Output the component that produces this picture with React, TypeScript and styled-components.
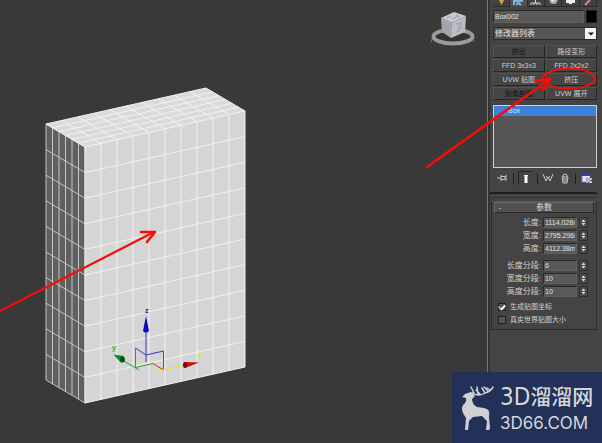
import React from "react";
import styled, { createGlobalStyle } from "styled-components";

const Global = createGlobalStyle`
  * { box-sizing: border-box; }
  body { margin: 0; background: #393939; }
  button, input, select { font: inherit; color: inherit; margin: 0; border-radius: 0; }
`;

const App_ = styled.div`
  position: relative;
  display: flex;
  min-height: 100vh;
  overflow: hidden;
  background: #393939;
  color: #d2d2d2;
  font-family: "Liberation Sans", "Noto Sans CJK SC", sans-serif;
  font-size: 8px;
  line-height: 10px;
`;

const Viewport = styled.main`
  flex: 1;
  min-width: 0;
  svg { display: block; width: 100%; height: auto; }
`;

const Panel = styled.aside`
  flex: none;
  width: 115px;
  padding: 0 5px 0 2px;
  background: #444444;
  border-left: 1px solid #8f7a24;
  box-shadow: inset 2px 0 #333431;
`;

const Stack = styled.div`
  display: flex;
  flex-direction: column;
  padding-left: 3px;
`;

const Tabs = styled.nav`
  display: grid;
  grid-template-columns: repeat(6, 1fr);
  height: 7px;
  margin-bottom: 3px;
`;

const Tab = styled.button<{ $active?: boolean }>`
  display: block;
  height: 7px;
  padding: 0;
  overflow: hidden;
  border: 0;
  border-right: 1px solid #2b2b2b;
  border-bottom: 1px solid ${p => (p.$active ? "#444" : "#2b2b2b")};
  background: ${p => (p.$active ? "#505050" : "#414141")};
  svg { display: block; margin: 0 auto; }
`;

const NameRow = styled.div`
  display: flex;
  gap: 2px;
  height: 13px;
  margin-bottom: 4px;
`;

const Field = styled.input`
  flex: 1;
  width: 100%;
  min-width: 0;
  padding: 0 1px;
  border: 1px solid #292929;
  border-right-color: #606060;
  border-bottom-color: #606060;
  background: #595959;
  color: #e2e2e2;
  font-size: 7px;
`;

const Swatch = styled.button`
  width: 11px;
  padding: 0;
  border: 1px solid #1c1c1c;
  background: #000;
`;

const Picker = styled.label`
  display: grid;
  grid-template-columns: 1fr 11px;
  height: 13px;
  margin-bottom: 5px;
  border: 1px solid #292929;
  background: #555;
  svg { grid-area: 1 / 2; width: 11px; height: 11px; background: #f3f3f3; pointer-events: none; }
`;

const Select = styled.select`
  grid-area: 1 / 1 / 2 / 3;
  appearance: none;
  padding: 0 1px;
  border: 0;
  background: transparent;
  color: #e4e4e4;
  line-height: 11px;
`;

const ButtonGrid = styled.div`
  display: grid;
  grid-template-columns: 1fr 1fr;
  grid-auto-rows: 13px;
  gap: 1px;
  margin-bottom: 5px;
`;

const ModButton = styled.button<{ $dim?: boolean }>`
  padding: 0;
  border: 1px solid #525252;
  border-right-color: #242424;
  border-bottom-color: #242424;
  background: #454545;
  color: ${p => (p.$dim ? "#111" : "#cfcfcf")};
  font-size: 7px;
  line-height: 11px;
  white-space: nowrap;
`;

const ModStack = styled.ul`
  height: 63px;
  margin: 0 0 2px;
  padding: 0;
  list-style: none;
  border: 1px solid #d0d0d0;
  background: #565656;
`;

const StackItem = styled.li`
  padding-left: 14px;
  background: #3d82d8;
  color: #d5e6f8;
  font-size: 7px;
`;

const Tools = styled.div`
  display: flex;
  align-items: center;
  justify-content: space-between;
  height: 16px;
  margin-bottom: 6px;
  padding: 0 4px 0 3px;
`;

const Tool = styled.button<{ $on?: boolean }>`
  display: grid;
  place-items: center;
  width: ${p => (p.$on ? "14px" : "12px")};
  height: 14px;
  padding: 0;
  border: 0;
  border-left: ${p => (p.$on ? "1px solid #222" : "0")};
  border-top: ${p => (p.$on ? "1px solid #222" : "0")};
  background: transparent;
`;

const Divider = styled.span`
  width: 1px;
  height: 11px;
  background: #202020;
`;

const Rule = styled.hr`
  height: 2px;
  margin: 0 0 3px;
  border: 0;
  background: #202020;
`;

const Rollout = styled.section`
  margin-left: 1px;
  padding-top: 3px;
  border-top: 1px solid #333;
`;

const Group = styled.fieldset`
  margin: 0;
  padding: 0 8px 3px 6px;
  min-width: 0;
  border: 1px solid #292929;
  border-top-color: #555;
  border-right-color: #303030;
`;

const RolloutTitle = styled.button`
  display: grid;
  grid-template-columns: 8px 1fr 8px;
  align-items: center;
  width: calc(100% + 10px);
  height: 11px;
  margin: 0 -5px 4px -4px;
  padding: 0 1px;
  border: 1px solid #292929;
  border-top-color: #686868;
  border-left-color: #686868;
  background: #505050;
  color: #dfdfdf;
  line-height: 9px;
`;

const Rows = styled.div`
  display: grid;
  row-gap: 2px;
  margin-bottom: 6px;
  & + & { margin-bottom: 3px; }
`;

const Row = styled.div`
  display: grid;
  grid-template-columns: 1fr 34px 9px;
  column-gap: 2px;
  height: 11px;
  align-items: center;
  text-align: right;
  white-space: nowrap;
  input { height: 11px; }
`;

const Spin = styled.span`
  display: flex;
  flex-direction: column;
  height: 11px;
  border: 1px solid #2e2e2e;
  button {
    flex: 1;
    display: grid;
    place-items: center;
    min-height: 0;
    padding: 0;
    border: 0;
    background: #494949;
  }
`;

const Check = styled.label`
  display: flex;
  align-items: center;
  gap: 4px;
  height: 13px;
  font-size: 7px;
  white-space: nowrap;
  input {
    appearance: none;
    display: grid;
    place-items: center;
    width: 8px;
    height: 8px;
    border: 1px solid #222;
    background: #555;
  }
  input:checked::before {
    content: "";
    width: 5px;
    height: 3px;
    border-left: 1px solid #fff;
    border-bottom: 2px solid #fff;
    transform: rotate(-45deg);
  }
`;

const Annotation = styled.svg`
  position: absolute;
  top: 0;
  right: 0;
  pointer-events: none;
`;

const Brand = styled.div`
  position: absolute;
  right: 0;
  bottom: 0;
  display: flex;
  align-items: center;
  gap: 6px;
  width: 150px;
  height: 71px;
  padding: 0 8px;
  background: #233057;
  color: #d5d7dc;
`;

const BrandText = styled.div`
  display: grid;
  row-gap: 6px;
  font-family: Inter, "Noto Sans CJK SC", sans-serif;
  white-space: nowrap;
`;

const BrandName = styled.div`
  display: flex;
  align-items: center;
  height: 24px;
  font-size: 21px;
  font-weight: 500;
  line-height: 24px;
`;

const BrandInitials = styled.span`
  font-family: "DejaVu Sans Condensed", "DejaVu Sans", sans-serif;
  font-size: 24px;
  font-weight: 400;
`;

const BrandSite = styled.div`
  font-size: 17px;
  line-height: 16px;
`;

type P = [number, number];
const lerp = (a: P, b: P, t: number): P => [a[0] + (b[0] - a[0]) * t, a[1] + (b[1] - a[1]) * t];

/* Grid lines of a quad a-b-c-d, with `u` cells along a-b and `v` cells along a-d. */
function mesh(a: P, b: P, c: P, d: P, u: number, v: number) {
  let path = "";
  for (let i = 0; i <= u; i++) path += `M${lerp(a, b, i / u)}L${lerp(d, c, i / u)}`;
  for (let j = 0; j <= v; j++) path += `M${lerp(a, d, j / v)}L${lerp(b, c, j / v)}`;
  return path;
}

const faces: { pts: [P, P, P, P]; u: number; v: number; fill: string; line: string }[] = [
  { pts: [[46, 124], [85, 147], [85, 403], [46, 380]], u: 6, v: 10, fill: "#606060", line: "#c4c4c4" },
  { pts: [[46, 124], [206, 88], [245, 111], [85, 147]], u: 10, v: 6, fill: "#dadada", line: "#f2f2f2" },
  { pts: [[85, 147], [245, 111], [245, 367], [85, 403]], u: 10, v: 10, fill: "#d5d5d5", line: "#f1f1f1" },
];

function Scene() {
  return (
    <svg viewBox="0 0 487 443" role="img" aria-label="Box002">
      {faces.map((f, i) => (
        <g key={i}>
          <polygon points={f.pts.join(" ")} fill={f.fill} />
          <path d={mesh(...f.pts, f.u, f.v)} stroke={f.line} strokeWidth="1" fill="none" />
        </g>
      ))}
      <g fill="none" strokeWidth="1">
        <path d="M146 362V330M135.500 348L146 355L163.500 351" stroke="#3838b8" />
        <path d="M135.500 348V367.500L153 363.500M139 370L122 360" stroke="#25a332" />
        <path d="M163.500 351V370L153 363.500" stroke="#c52929" />
        <path d="M156 371.500L184 365" stroke="#e8e417" />
      </g>
      <path d="M146 316L143 331Q146 334 149 331Z" fill="#0909bd" />
      <path d="M113.500 354.500L124 356L121 363Z" fill="#07901b" />
      <ellipse cx="122.500" cy="359.500" rx="2.400" ry="3" fill="#074f10" />
      <path d="M199 362.500L184 362L185 368Z" fill="#d20a0a" />
      <ellipse cx="185" cy="365" rx="2" ry="3" fill="#770909" />
      <g fontFamily="Liberation Sans, sans-serif" fontSize="7" fontWeight="bold">
        <text x="145" y="313" fill="#2020a8">z</text>
        <text x="112" y="350" fill="#3ba83f">y</text>
        <text x="198" y="358" fill="#e8e417">x</text>
      </g>
      <ellipse cx="453" cy="36.500" rx="19.500" ry="7" fill="#333" stroke="#999b9b" strokeWidth="4" />
      <path d="M432 39l-1 3M473 39l1 3" stroke="#777" />
      <path d="M441 18L452 22.500L451 38L442 32Z" fill="#a3a8ad" />
      <path d="M441 18L454 12L466 16L452 22.500Z" fill="#c7cbd0" />
      <path d="M452 22.500L466 16L465 32L451 38Z" fill="#b9bec5" />
      <path d="M447 18l4-2M452 19l7-3M456 15l4 2M456 24l3-1v8l-3 1M461 22v7M445 24v6M448 26v5" stroke="#959da7" fill="none" />
      <g stroke="#f60d08" fill="none" strokeLinecap="round" strokeLinejoin="round">
        <path d="M0 311L154 232" strokeWidth="2.200" />
        <path d="M141 232L155 232L147 242" strokeWidth="2.600" />
      </g>
    </svg>
  );
}

const tabIcons = [
  <path d="M3 0h5l-2.500 5z" fill="#d6a33c" />,
  <path d="M1 5V1h9M4 5q0-4 4 0" stroke="#80b5df" strokeWidth="2" fill="none" />,
  <path d="M5.500 0v3M1 5V3h9v2M4 5V3M7 5V3" stroke="#ddd" fill="none" />,
  <g><circle cx="5.500" cy="0" r="4" fill="#aaa" /><circle cx="5" cy="0" r="2" fill="#ddd" /></g>,
  <path d="M1 0h9v3H7v1H4V3H1z" fill="#eee" />,
  <path d="M8 0L3 5" stroke="#c98d8d" strokeWidth="2" />,
];
const tabNames = ["Create", "Modify", "Hierarchy", "Motion", "Display", "Utilities"];

const modifiers: [string, boolean][] = [
  ["挤出", true], ["路径变形", false],
  ["FFD 3x3x3", false], ["FFD 2x2x2", false],
  ["UVW 贴图", false], ["挤压", false],
  ["倒角剖面", true], ["UVW 展开", false],
];

const sizes: [string, string][] = [["长度", "1114.028m"], ["宽度", "2795.296m"], ["高度", "4112.38m"]];
const segments: [string, string][] = [["长度分段", "6"], ["宽度分段", "10"], ["高度分段", "10"]];

function Params({ items }: { items: [string, string][] }) {
  return (
    <Rows>
      {items.map(([label, value]) => (
        <Row key={label}>
          <label htmlFor={label}>{label}:</label>
          <Field id={label} defaultValue={value} />
          <Spin>
            <button aria-label={label + " +"}><svg width="5" height="3"><path d="M0.500 3L2.500 0.500L4.500 3Z" fill="#ddd" /></svg></button>
            <button aria-label={label + " -"}><svg width="5" height="3"><path d="M0.500 0L2.500 2.500L4.500 0Z" fill="#ddd" /></svg></button>
          </Spin>
        </Row>
      ))}
    </Rows>
  );
}

export default function App() {
  return (
    <App_>
      <Global />
      <Viewport><Scene /></Viewport>
      <Panel>
        <Stack>
          <Tabs>
            {tabIcons.map((icon, i) => (
              <Tab key={i} $active={i === 1} aria-label={tabNames[i]}>
                <svg width="11" height="6">{icon}</svg>
              </Tab>
            ))}
          </Tabs>
          <NameRow>
            <Field aria-label="Name" defaultValue="Box002" />
            <Swatch aria-label="Color" />
          </NameRow>
          <Picker>
            <Select aria-label="修改器列表"><option>修改器列表</option></Select>
            <svg viewBox="0 0 11 11"><path d="M3 4.500h6L6 7.500z" fill="#111" /></svg>
          </Picker>
          <ButtonGrid>
            {modifiers.map(([name, dim]) => <ModButton key={name} $dim={dim}>{name}</ModButton>)}
          </ButtonGrid>
          <ModStack><StackItem>Box</StackItem></ModStack>
          <Tools>
            <Tool aria-label="Pin stack">
              <svg width="12" height="10" fill="none" stroke="#c3c3c3"><path d="M1 5h4M5 2v6M5 3.500h4v3H5M10 2v6" /></svg>
            </Tool>
            <Divider />
            <Tool $on aria-label="Show end result">
              <svg width="8" height="10"><path d="M2 1h4v1H5.500v7h-3V2H2z" fill="#fff" /></svg>
            </Tool>
            <Divider />
            <Tool aria-label="Make unique">
              <svg width="12" height="10" fill="none" stroke="#c8c8c8"><path d="M1 1l3 7 2-4 2 4 3-7M4 3l2 2 2-2" /></svg>
            </Tool>
            <Tool aria-label="Remove modifier">
              <svg width="10" height="11" fill="none" stroke="#c8c8c8"><path d="M3 4V2q2-2 4 0v2M2 4h6l-1 6H3zM4 5v4M6 5v4" /></svg>
            </Tool>
            <Divider />
            <Tool aria-label="Configure sets">
              <svg width="12" height="11"><path d="M1 1h8v8H1z" fill="#e5e8f4" /><path d="M1 1h8v2H1z" fill="#3441bc" /><path d="M1 3v6h3" stroke="#7881d1" fill="none" /><path d="M5 5h2v2H5zM8 5h3v2H8zM5 8h2v2H5zM8 8h3v2H8z" fill="#fff" stroke="#444e8f" strokeWidth=".5" /></svg>
            </Tool>
          </Tools>
        </Stack>
        <Rule />
        <Rollout>
          <Group>
            <RolloutTitle aria-expanded="true"><span>-</span><span>参数</span></RolloutTitle>
            <Params items={sizes} />
            <Params items={segments} />
            <Check><input type="checkbox" defaultChecked />生成贴图坐标</Check>
            <Check><input type="checkbox" />真实世界贴图大小</Check>
          </Group>
        </Rollout>
      </Panel>
      <Annotation width="182" height="180" fill="none" stroke="#f60d08" strokeLinecap="round" strokeLinejoin="round">
        <path d="M7 167L130 79" strokeWidth="2.600" />
        <path d="M116 81L130 79L123 90" strokeWidth="3" />
        <ellipse cx="149" cy="78.500" rx="26" ry="10" strokeWidth="2" />
      </Annotation>
      <Brand>
        <svg width="34" height="46" viewBox="0 0 34 46">
          <path d="M5 9L11 7L15 11L12 14Q12 19 17 22L24 23Q31 24 29 32L30 43L29 45H26L27 36L22 31L13 32L9 36L8 45H5L6 33Q0 25 3 20Q7 17 6 13L2 12Z" fill="#d0d1d4" />
          <path d="M12 8Q19 12 25 8Q30 7 33 2M25 8L22 3M28 6L24 2M18 9L17 2M14 8L11 2M20 9L16 5M30 5L27 3" stroke="#d0d1d4" strokeWidth="1.500" fill="none" strokeLinecap="round" />
        </svg>
        <BrandText>
          <BrandName><BrandInitials>3D</BrandInitials>溜溜网</BrandName>
          <BrandSite>3D66.COM</BrandSite>
        </BrandText>
      </Brand>
    </App_>
  );
}
